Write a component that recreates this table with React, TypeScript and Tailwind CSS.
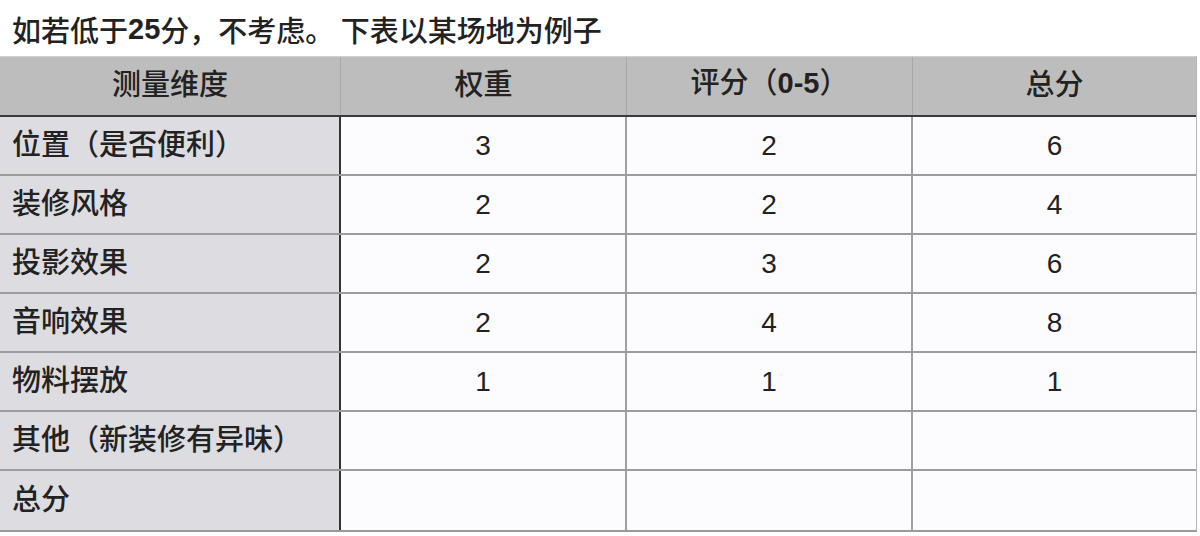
import React from "react";

const rows: [string, string, string, string][] = [
  ["位置（是否便利）", "3", "2", "6"],
  ["装修风格", "2", "2", "4"],
  ["投影效果", "2", "3", "6"],
  ["音响效果", "2", "4", "8"],
  ["物料摆放", "1", "1", "1"],
  ["其他（新装修有异味）", "", "", ""],
  ["总分", "", "", ""],
];

const headers = ["测量维度", "权重", "评分（0-5）", "总分"];

const cjk = { fontFamily: '"Noto Sans CJK SC", "Noto Sans", sans-serif' };
const num = { fontFamily: '"Liberation Sans", "Noto Sans CJK SC", sans-serif' };

export default function App() {
  return (
    <div className="w-[1200px] h-[536px] bg-white overflow-hidden text-[#222]" style={cjk}>
      <div className="h-[56px] pl-[12px] pt-[2px] flex items-center text-[29px] font-medium leading-none">
        <span>如若低于</span>
        <span className="font-bold" style={num}>25</span>
        <span>分，不考虑。 下表以某场地为例子</span>
      </div>
      <div className="w-[1197px] border-r border-[#b5b5b5] border-b-2 border-b-[#9a9a9a]">
        <div className="grid grid-cols-[341px_286px_286px_1fr] h-[61px] bg-[#bdbdbd] border-t border-[#d0d0d0] border-b-2 border-b-[#3a3a3a]">
          {headers.map((h, i) => (
            <div
              key={h}
              className={`flex items-center justify-center pb-[8px] text-[29px] leading-none font-medium ${i < 3 ? "border-r border-[#a8a8a8]" : ""}`}
            >
              {h === "评分（0-5）" ? (
                <span>
                  评分（<span className="font-bold" style={num}>0-5</span>）
                </span>
              ) : (
                h
              )}
            </div>
          ))}
        </div>
        {rows.map((r, ri) => (
          <div
            key={ri}
            className={`grid grid-cols-[341px_286px_286px_1fr] h-[59px] ${ri < rows.length - 1 ? "border-b-2 border-[#9c9c9c]" : ""}`}
          >
            <div className="bg-[#dddce0] border-r-2 border-[#333] flex items-center pl-[12px] pb-[6px] text-[29px] leading-none font-medium">
              {r[0]}
            </div>
            {r.slice(1).map((v, ci) => (
              <div
                key={ci}
                className={`bg-[#fcfcfe] flex items-center justify-center text-[28px] leading-none ${ci < 2 ? "border-r-2 border-[#a0a0a0]" : ""}`}
                style={num}
              >
                {v}
              </div>
            ))}
          </div>
        ))}
      </div>
    </div>
  );
}
